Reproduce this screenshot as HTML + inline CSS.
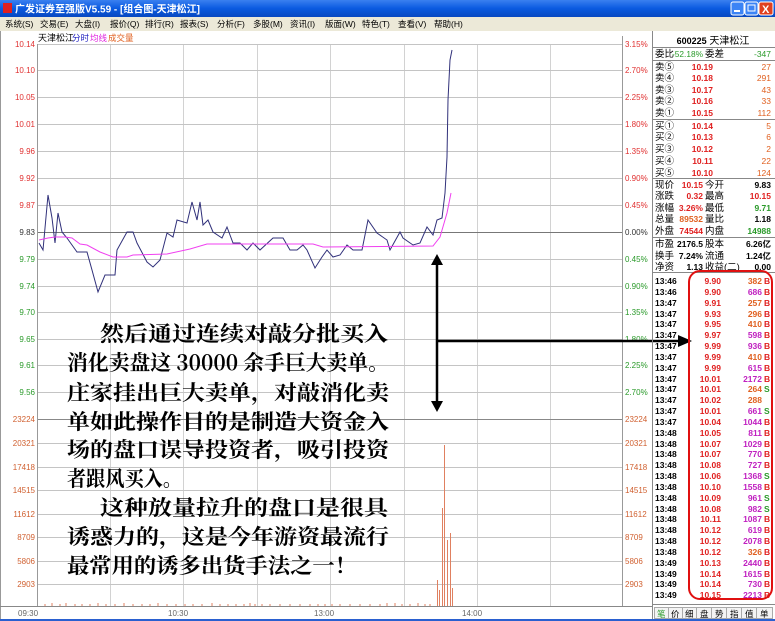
<!DOCTYPE html>
<html><head><meta charset="utf-8"><style>
body{margin:0;width:775px;height:621px;overflow:hidden;background:#fff;font-family:"Liberation Sans","Noto Sans CJK SC",sans-serif}
svg{position:absolute;left:0;top:0}
</style></head><body>
<svg width="775" height="621" viewBox="0 0 775 621" font-family="Liberation Sans, Noto Sans CJK SC, sans-serif">
<defs><linearGradient id="tb" x1="0" y1="0" x2="0" y2="1"><stop offset="0" stop-color="#3a80f0"/><stop offset=".5" stop-color="#0a5ae0"/><stop offset="1" stop-color="#0848c0"/></linearGradient></defs>
<rect x="0" y="0" width="775" height="17" fill="url(#tb)"/>
<rect x="3" y="3" width="9" height="10" fill="#e02020"/>
<text x="15" y="12.5" font-size="10" fill="#fff" font-weight="bold">广发证券至强版V5.59 - [组合图-天津松江]</text>
<rect x="731" y="2" width="13" height="13" rx="2" fill="#3c84f5" stroke="#fff"/><rect x="734" y="10" width="6" height="2" fill="#fff"/>
<rect x="745" y="2" width="13" height="13" rx="2" fill="#3c84f5" stroke="#fff"/><rect x="748" y="5" width="7" height="6" fill="none" stroke="#fff"/>
<rect x="759" y="2" width="14" height="13" rx="2" fill="#e04020" stroke="#fff"/><text x="762" y="13" font-size="11" fill="#fff" font-weight="bold">X</text>
<rect x="0" y="17" width="775" height="14" fill="#ece9d8"/>
<g font-size="8.5" fill="#000">
<text x="5" y="27">系统(S)</text><text x="40" y="27">交易(E)</text><text x="75" y="27">大盘(I)</text><text x="110" y="27">报价(Q)</text><text x="145" y="27">排行(R)</text><text x="180" y="27">报表(S)</text><text x="217" y="27">分析(F)</text><text x="253" y="27">多股(M)</text><text x="290" y="27">资讯(I)</text><text x="325" y="27">版面(W)</text><text x="362" y="27">特色(T)</text><text x="398" y="27">查看(V)</text><text x="434" y="27">帮助(H)</text>
</g>
<rect x="0" y="31" width="775" height="588" fill="#fff"/>
<line x1="0.5" y1="31" x2="0.5" y2="619" stroke="#999"/>
<g stroke="#d2d2d2" stroke-width="1">
<line x1="110.5" y1="44" x2="110.5" y2="606"/><line x1="183.5" y1="44" x2="183.5" y2="606"/><line x1="257.5" y1="44" x2="257.5" y2="606"/><line x1="330.5" y1="44" x2="330.5" y2="606"/><line x1="404.5" y1="44" x2="404.5" y2="606"/><line x1="477.5" y1="44" x2="477.5" y2="606"/><line x1="550.5" y1="44" x2="550.5" y2="606"/>
</g>
<g stroke="#c4c4c4">
<line x1="37" y1="44.5" x2="622" y2="44.5"/><line x1="37" y1="70.5" x2="622" y2="70.5"/><line x1="37" y1="97.5" x2="622" y2="97.5"/><line x1="37" y1="124.5" x2="622" y2="124.5"/><line x1="37" y1="151.5" x2="622" y2="151.5"/><line x1="37" y1="178.5" x2="622" y2="178.5"/><line x1="37" y1="205.5" x2="622" y2="205.5"/><line x1="37" y1="259.5" x2="622" y2="259.5"/><line x1="37" y1="286.5" x2="622" y2="286.5"/><line x1="37" y1="312.5" x2="622" y2="312.5"/><line x1="37" y1="339.5" x2="622" y2="339.5"/><line x1="37" y1="365.5" x2="622" y2="365.5"/><line x1="37" y1="392.5" x2="622" y2="392.5"/>
<line x1="37" y1="443.5" x2="622" y2="443.5"/><line x1="37" y1="467.5" x2="622" y2="467.5"/><line x1="37" y1="490.5" x2="622" y2="490.5"/><line x1="37" y1="514.5" x2="622" y2="514.5"/><line x1="37" y1="537.5" x2="622" y2="537.5"/><line x1="37" y1="561.5" x2="622" y2="561.5"/><line x1="37" y1="584.5" x2="622" y2="584.5"/>
</g>
<line x1="37" y1="232.5" x2="622" y2="232.5" stroke="#777"/>
<line x1="37" y1="419.5" x2="622" y2="419.5" stroke="#888"/>
<line x1="37" y1="606.5" x2="622" y2="606.5" stroke="#888"/>
<line x1="37.5" y1="44" x2="37.5" y2="606" stroke="#999"/>
<line x1="622.5" y1="36" x2="622.5" y2="606" stroke="#999"/>
<g font-size="8" text-anchor="end">
<g fill="#e03030"><text x="35" y="47">10.14</text><text x="35" y="73">10.10</text><text x="35" y="100">10.05</text><text x="35" y="127">10.01</text><text x="35" y="154">9.96</text><text x="35" y="181">9.92</text><text x="35" y="208">9.87</text></g>
<text x="35" y="235" fill="#333">9.83</text>
<g fill="#2a9a2a"><text x="35" y="262">9.79</text><text x="35" y="289">9.74</text><text x="35" y="315">9.70</text><text x="35" y="342">9.65</text><text x="35" y="368">9.61</text><text x="35" y="395">9.56</text></g>
<g fill="#d06030"><text x="35" y="422">23224</text><text x="35" y="446">20321</text><text x="35" y="470">17418</text><text x="35" y="493">14515</text><text x="35" y="517">11612</text><text x="35" y="540">8709</text><text x="35" y="564">5806</text><text x="35" y="587">2903</text></g>
</g>
<g font-size="8" text-anchor="start">
<g fill="#e03030"><text x="625" y="47">3.15%</text><text x="625" y="73">2.70%</text><text x="625" y="100">2.25%</text><text x="625" y="127">1.80%</text><text x="625" y="154">1.35%</text><text x="625" y="181">0.90%</text><text x="625" y="208">0.45%</text></g>
<text x="625" y="235" fill="#333">0.00%</text>
<g fill="#2a9a2a"><text x="625" y="262">0.45%</text><text x="625" y="289">0.90%</text><text x="625" y="315">1.35%</text><text x="625" y="342">1.80%</text><text x="625" y="368">2.25%</text><text x="625" y="395">2.70%</text></g>
<g fill="#d06030"><text x="625" y="422">23224</text><text x="625" y="446">20321</text><text x="625" y="470">17418</text><text x="625" y="493">14515</text><text x="625" y="517">11612</text><text x="625" y="540">8709</text><text x="625" y="564">5806</text><text x="625" y="587">2903</text></g>
</g>
<g font-size="8" fill="#666"><text x="18" y="616">09:30</text><text x="168" y="616">10:30</text><text x="314" y="616">13:00</text><text x="462" y="616">14:00</text></g>
<line x1="0" y1="606.5" x2="652" y2="606.5" stroke="#888"/>
<text x="38" y="41" font-size="9" fill="#000">天津松江</text><text x="72" y="41" font-size="8.5" fill="#2020c0">分时</text><text x="90" y="41" font-size="8.5" fill="#e020e0">均线</text><text x="108" y="41" font-size="8.5" fill="#e06020">成交量</text>
<polyline fill="none" stroke="#30307a" stroke-width="1" points="39,243 43,250 48,195 52,218 55,243 58,213 62,232 67,238 77,252 87,252 92,270 98,292 105,275 115,275 117,250 127,232 133,232 137,243 147,262 153,267 160,260 167,233 173,237 177,220 187,223 192,202 197,220 200,202 203,225 208,220 213,232 222,238 227,227 233,243 240,243 247,250 253,243 260,250 273,238 283,238 290,250 297,250 303,245 307,250 315,268 322,257 327,250 333,257 340,255 347,245 353,250 362,250 368,220 377,233 387,240 390,250 400,232 403,238 413,245 420,243 427,227 433,235 437,220 442,218 445,193 447,157 448,100 450,60 452,50"/>
<polyline fill="none" stroke="#f040f0" stroke-width="1" points="39,240 48,238 55,237 65,237 72,238 80,244 87,245 100,252 113,257 127,257 133,255 167,254 190,249 207,244 213,244 313,244 323,247 433,246 440,237 447,213 451,193"/>
<g stroke="#e08060" stroke-width="1">
<path d="M45 604V606M52 603V606M60 604V606M66 603V606M75 604V606M82 604V606M90 604V606M98 603V606M106 604V606M115 604V606M124 603V606M133 604V606M142 604V606M150 604V606M158 603V606M167 604V606M176 604V606M185 604V606M193 604V606M202 604V606M212 603V606M220 604V606M228 604V606M236 604V606M244 604V606M250 603V606M255 604V606M262 604V606M270 604V606M280 604V606M290 604V606M300 604V606M310 604V606M318 604V606M325 604V606M332 604V606M340 604V606M350 604V606M360 604V606M370 604V606M380 604V606M387 603V606M395 603V606M402 604V606M410 604V606M418 603V606M425 604V606M430 604V606"/>
<path d="M437.5 580V606M439.5 590V606M442.5 508V606M444.5 445V606M447.5 540V606M450.5 533V606M452.5 588V606"/>
</g>
<g font-family="Noto Serif CJK SC, serif" font-weight="bold" font-size="21" fill="#000">
<text x="100" y="341" textLength="288" lengthAdjust="spacingAndGlyphs">然后通过连续对敲分批买入</text>
<text x="67" y="370" textLength="322" lengthAdjust="spacingAndGlyphs">消化卖盘这 30000 余手巨大卖单。</text>
<text x="67" y="400" textLength="322" lengthAdjust="spacingAndGlyphs">庄家挂出巨大卖单，对敲消化卖</text>
<text x="67" y="429" textLength="322" lengthAdjust="spacingAndGlyphs">单如此操作目的是制造大资金入</text>
<text x="67" y="457" textLength="322" lengthAdjust="spacingAndGlyphs">场的盘口误导投资者，吸引投资</text>
<text x="67" y="486" textLength="115" lengthAdjust="spacingAndGlyphs">者跟风买入。</text>
<text x="100" y="515" textLength="288" lengthAdjust="spacingAndGlyphs">这种放量拉升的盘口是很具</text>
<text x="67" y="544" textLength="322" lengthAdjust="spacingAndGlyphs">诱惑力的，这是今年游资最流行</text>
<text x="67" y="573" textLength="290" lengthAdjust="spacingAndGlyphs">最常用的诱多出货手法之一！</text>
</g>
<line x1="437" y1="262" x2="437" y2="404" stroke="#000" stroke-width="2.5"/>
<path d="M431 265 L437 254 L443 265Z M431 401 L437 412 L443 401Z" fill="#000"/>
<line x1="437" y1="341" x2="680" y2="341" stroke="#000" stroke-width="2.5"/>
<path d="M678 335 L692 341 L678 347Z" fill="#000"/>
<line x1="652.5" y1="31" x2="652.5" y2="619" stroke="#888"/>
<text x="713" y="44" font-size="10" text-anchor="middle" fill="#000"><tspan font-weight="bold" font-size="9">600225</tspan> 天津松江</text>
<g stroke="#888"><line x1="653" y1="47.5" x2="775" y2="47.5"/><line x1="653" y1="60.5" x2="775" y2="60.5"/><line x1="653" y1="119.5" x2="775" y2="119.5"/><line x1="653" y1="178.5" x2="775" y2="178.5"/><line x1="653" y1="237.5" x2="775" y2="237.5"/><line x1="653" y1="272.5" x2="775" y2="272.5"/><line x1="653" y1="604.5" x2="775" y2="604.5"/></g>
<g font-size="9.5" fill="#000">
<text x="655" y="57">委比</text><text x="705" y="57">委差</text>
<text x="655" y="70">卖⑤</text><text x="655" y="81">卖④</text><text x="655" y="93">卖③</text><text x="655" y="104">卖②</text><text x="655" y="116">卖①</text>
<text x="655" y="129">买①</text><text x="655" y="140">买②</text><text x="655" y="152">买③</text><text x="655" y="164">买④</text><text x="655" y="176">买⑤</text>
<text x="655" y="188">现价</text><text x="705" y="188">今开</text>
<text x="655" y="199">涨跌</text><text x="705" y="199">最高</text>
<text x="655" y="211">涨幅</text><text x="705" y="211">最低</text>
<text x="655" y="222">总量</text><text x="705" y="222">量比</text>
<text x="655" y="234">外盘</text><text x="705" y="234">内盘</text>
<text x="655" y="247">市盈</text><text x="705" y="247">股本</text>
<text x="655" y="259">换手</text><text x="705" y="259">流通</text>
<text x="655" y="270">净资</text><text x="705" y="270">收益(二)</text>
</g>
<g font-size="8.5" font-weight="bold" text-anchor="end">
<text x="703" y="57" fill="#2a9a2a" font-weight="normal" font-size="8" textLength="31" lengthAdjust="spacingAndGlyphs">-52.18%</text><text x="771" y="57" fill="#2a9a2a" font-weight="normal">-347</text>
<g fill="#e02020"><text x="713" y="70">10.19</text><text x="713" y="81">10.18</text><text x="713" y="93">10.17</text><text x="713" y="104">10.16</text><text x="713" y="116">10.15</text><text x="713" y="129">10.14</text><text x="713" y="140">10.13</text><text x="713" y="152">10.12</text><text x="713" y="164">10.11</text><text x="713" y="176">10.10</text></g>
<g fill="#e06020" font-weight="normal"><text x="771" y="70">27</text><text x="771" y="81">291</text><text x="771" y="93">43</text><text x="771" y="104">33</text><text x="771" y="116">112</text><text x="771" y="129">5</text><text x="771" y="140">6</text><text x="771" y="152">2</text><text x="771" y="164">22</text><text x="771" y="176">124</text></g>
<text x="703" y="188" fill="#e02020">10.15</text><text x="771" y="188" fill="#000">9.83</text>
<text x="703" y="199" fill="#e02020">0.32</text><text x="771" y="199" fill="#e02020">10.15</text>
<text x="703" y="211" fill="#e02020">3.26%</text><text x="771" y="211" fill="#2a9a2a">9.71</text>
<text x="703" y="222" fill="#e06020">89532</text><text x="771" y="222" fill="#000">1.18</text>
<text x="703" y="234" fill="#e02020">74544</text><text x="771" y="234" fill="#2a9a2a">14988</text>
<text x="703" y="247" fill="#000">2176.5</text><text x="771" y="247" fill="#000">6.26亿</text>
<text x="703" y="259" fill="#000">7.24%</text><text x="771" y="259" fill="#000">1.24亿</text>
<text x="703" y="270" fill="#000">1.13</text><text x="771" y="270" fill="#000">0.00</text>
</g>
<g font-size="8.5" font-weight="bold">
<g fill="#000">
<text x="655" y="284">13:46</text><text x="655" y="295">13:46</text><text x="655" y="306">13:47</text><text x="655" y="317">13:47</text><text x="655" y="327">13:47</text><text x="655" y="338">13:47</text><text x="655" y="349">13:47</text><text x="655" y="360">13:47</text><text x="655" y="371">13:47</text><text x="655" y="382">13:47</text><text x="655" y="392">13:47</text><text x="655" y="403">13:47</text><text x="655" y="414">13:47</text><text x="655" y="425">13:47</text><text x="655" y="436">13:48</text><text x="655" y="447">13:48</text><text x="655" y="457">13:48</text><text x="655" y="468">13:48</text><text x="655" y="479">13:48</text><text x="655" y="490">13:48</text><text x="655" y="501">13:48</text><text x="655" y="512">13:48</text><text x="655" y="522">13:48</text><text x="655" y="533">13:48</text><text x="655" y="544">13:48</text><text x="655" y="555">13:48</text><text x="655" y="566">13:49</text><text x="655" y="577">13:49</text><text x="655" y="587">13:49</text><text x="655" y="598">13:49</text>
</g>
<g fill="#e02020" text-anchor="end">
<text x="721" y="284">9.90</text><text x="721" y="295">9.90</text><text x="721" y="306">9.91</text><text x="721" y="317">9.93</text><text x="721" y="327">9.95</text><text x="721" y="338">9.97</text><text x="721" y="349">9.99</text><text x="721" y="360">9.99</text><text x="721" y="371">9.99</text><text x="721" y="382">10.01</text><text x="721" y="392">10.01</text><text x="721" y="403">10.02</text><text x="721" y="414">10.01</text><text x="721" y="425">10.04</text><text x="721" y="436">10.05</text><text x="721" y="447">10.07</text><text x="721" y="457">10.07</text><text x="721" y="468">10.08</text><text x="721" y="479">10.06</text><text x="721" y="490">10.10</text><text x="721" y="501">10.09</text><text x="721" y="512">10.08</text><text x="721" y="522">10.11</text><text x="721" y="533">10.12</text><text x="721" y="544">10.12</text><text x="721" y="555">10.12</text><text x="721" y="566">10.13</text><text x="721" y="577">10.14</text><text x="721" y="587">10.14</text><text x="721" y="598">10.15</text>
</g>
<g text-anchor="end" fill="#c020c0">
<text x="762" y="284" fill="#e06020">382</text><text x="762" y="295">686</text><text x="762" y="306" fill="#e06020">257</text><text x="762" y="317" fill="#e06020">296</text><text x="762" y="327" fill="#e06020">410</text><text x="762" y="338">598</text><text x="762" y="349">936</text><text x="762" y="360" fill="#e06020">410</text><text x="762" y="371">615</text><text x="762" y="382">2172</text><text x="762" y="392" fill="#e06020">264</text><text x="762" y="403" fill="#e06020">288</text><text x="762" y="414">661</text><text x="762" y="425">1044</text><text x="762" y="436">811</text><text x="762" y="447">1029</text><text x="762" y="457">770</text><text x="762" y="468">727</text><text x="762" y="479">1368</text><text x="762" y="490">1558</text><text x="762" y="501">961</text><text x="762" y="512">982</text><text x="762" y="522">1087</text><text x="762" y="533">619</text><text x="762" y="544">2078</text><text x="762" y="555" fill="#e06020">326</text><text x="762" y="566">2440</text><text x="762" y="577">1615</text><text x="762" y="587">730</text><text x="762" y="598">2213</text>
</g>
<g fill="#e02020">
<text x="764" y="284">B</text><text x="764" y="295">B</text><text x="764" y="306">B</text><text x="764" y="317">B</text><text x="764" y="327">B</text><text x="764" y="338">B</text><text x="764" y="349">B</text><text x="764" y="360">B</text><text x="764" y="371">B</text><text x="764" y="382">B</text><text x="764" y="392" fill="#2a9a2a">S</text><text x="764" y="414" fill="#2a9a2a">S</text><text x="764" y="425">B</text><text x="764" y="436">B</text><text x="764" y="447">B</text><text x="764" y="457">B</text><text x="764" y="468">B</text><text x="764" y="479" fill="#2a9a2a">S</text><text x="764" y="490">B</text><text x="764" y="501" fill="#2a9a2a">S</text><text x="764" y="512" fill="#2a9a2a">S</text><text x="764" y="522">B</text><text x="764" y="533">B</text><text x="764" y="544">B</text><text x="764" y="555">B</text><text x="764" y="566">B</text><text x="764" y="577">B</text><text x="764" y="587">B</text><text x="764" y="598">B</text>
</g>
</g>
<rect x="689" y="271" width="83" height="328" rx="11" fill="none" stroke="#e01010" stroke-width="2"/>
<g font-size="8.5" fill="#000" stroke="#aaa">
<rect x="654.5" y="607.5" width="14" height="11" fill="#f4f4f4"/><rect x="668.5" y="607.5" width="14" height="11" fill="#f4f4f4"/><rect x="682.5" y="607.5" width="14" height="11" fill="#f4f4f4"/><rect x="696.5" y="607.5" width="15" height="11" fill="#f4f4f4"/><rect x="711.5" y="607.5" width="15" height="11" fill="#f4f4f4"/><rect x="726.5" y="607.5" width="15" height="11" fill="#f4f4f4"/><rect x="741.5" y="607.5" width="15" height="11" fill="#f4f4f4"/><rect x="756.5" y="607.5" width="16" height="11" fill="#f4f4f4"/>
</g>
<g font-size="8.5"><text x="657" y="617" fill="#2a9a2a">笔</text><text x="671" y="617">价</text><text x="685" y="617">细</text><text x="700" y="617">盘</text><text x="715" y="617">势</text><text x="730" y="617">指</text><text x="745" y="617">值</text><text x="760" y="617">单</text></g>
<rect x="0" y="619" width="775" height="2" fill="#2a60d0"/>
</svg>
</body></html>
